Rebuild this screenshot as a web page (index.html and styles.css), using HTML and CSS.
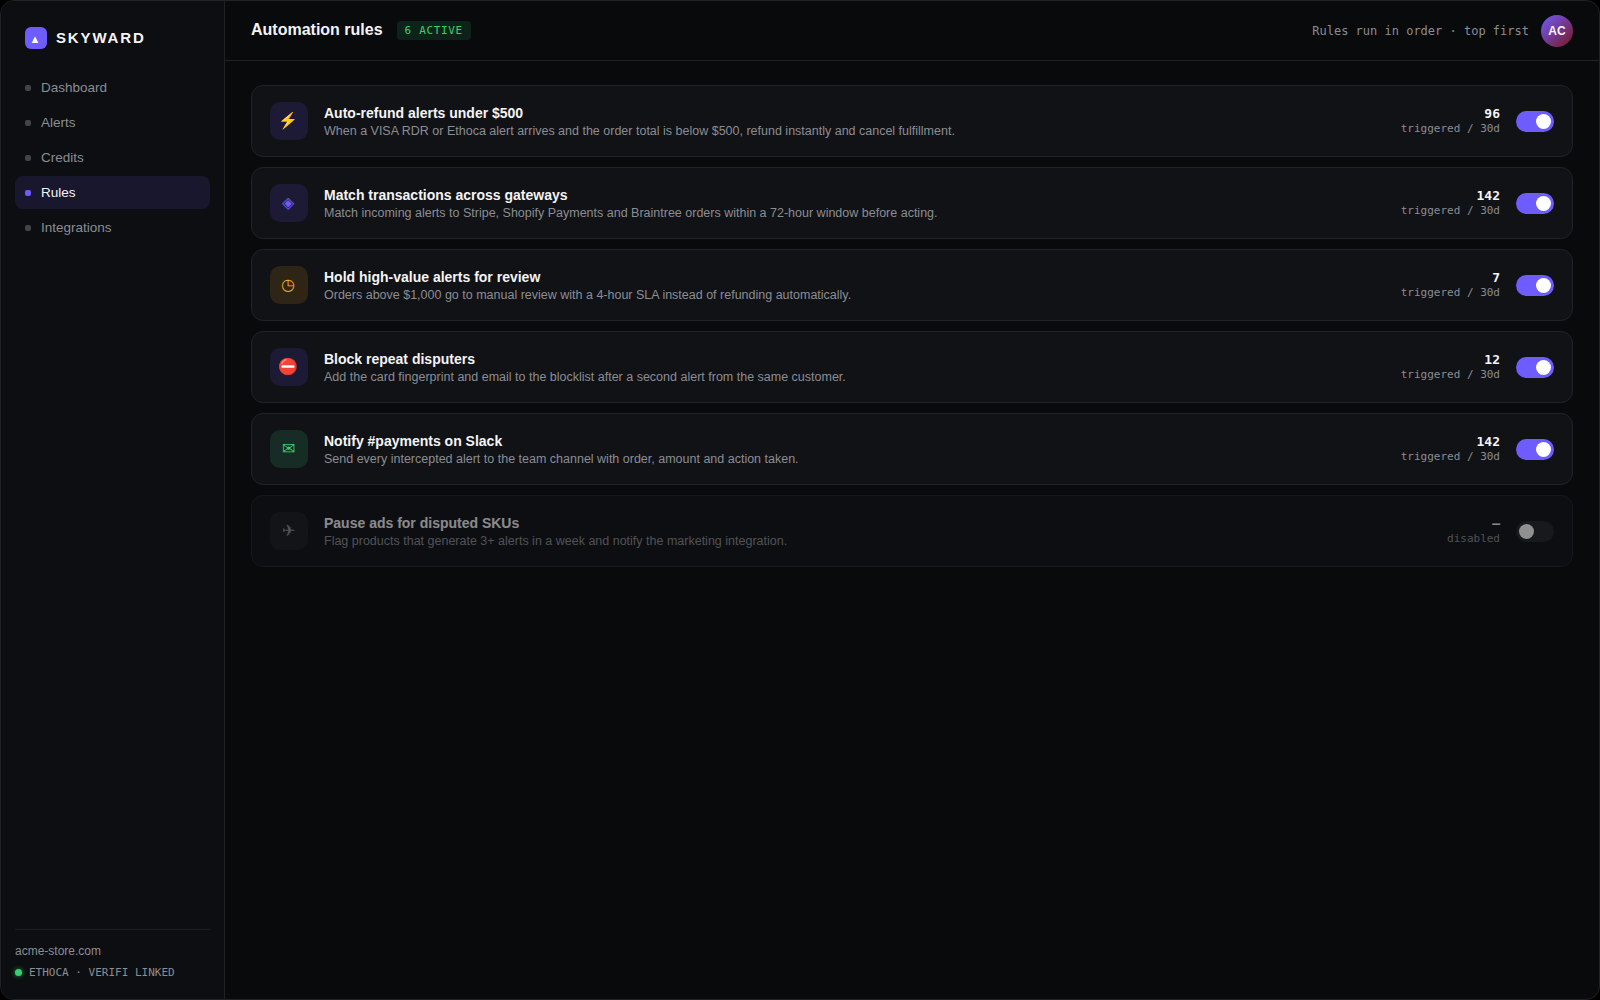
FILE: index.html
```html
<!DOCTYPE html>
<html lang="en">
<head>
<meta charset="utf-8">
<title>Skyward – Automation rules</title>
<link rel="stylesheet" href="styles.css">
</head>
<body>
<div class="window">
  <aside class="sidebar">
    <div class="brand"><span class="brand-mark">▲</span><span class="brand-name">SKYWARD</span></div>
    <nav class="nav">
      <a class="nav-item">Dashboard</a>
      <a class="nav-item">Alerts</a>
      <a class="nav-item">Credits</a>
      <a class="nav-item active">Rules</a>
      <a class="nav-item">Integrations</a>
    </nav>
    <div class="account">
      <div class="store">acme-store.com</div>
      <div class="status"><span class="status-dot"></span>ETHOCA · VERIFI LINKED</div>
    </div>
  </aside>
  <main class="main">
    <header class="topbar">
      <h1 class="title">Automation rules</h1>
      <span class="badge">6 ACTIVE</span>
      <span class="hint">Rules run in order · top first</span>
      <span class="avatar">AC</span>
    </header>
    <section class="rules">
      <article class="rule">
        <div class="icon">⚡</div>
        <div class="info"><div class="name">Auto-refund alerts under $500</div><div class="desc">When a VISA RDR or Ethoca alert arrives and the order total is below $500, refund instantly and cancel fulfillment.</div></div>
        <div class="stat"><b>96</b><span>triggered / 30d</span></div>
        <div class="toggle on"></div>
      </article>
      <article class="rule">
        <div class="icon">◈</div>
        <div class="info"><div class="name">Match transactions across gateways</div><div class="desc">Match incoming alerts to Stripe, Shopify Payments and Braintree orders within a 72-hour window before acting.</div></div>
        <div class="stat"><b>142</b><span>triggered / 30d</span></div>
        <div class="toggle on"></div>
      </article>
      <article class="rule">
        <div class="icon amber">◷</div>
        <div class="info"><div class="name">Hold high-value alerts for review</div><div class="desc">Orders above $1,000 go to manual review with a 4-hour SLA instead of refunding automatically.</div></div>
        <div class="stat"><b>7</b><span>triggered / 30d</span></div>
        <div class="toggle on"></div>
      </article>
      <article class="rule">
        <div class="icon">⛔</div>
        <div class="info"><div class="name">Block repeat disputers</div><div class="desc">Add the card fingerprint and email to the blocklist after a second alert from the same customer.</div></div>
        <div class="stat"><b>12</b><span>triggered / 30d</span></div>
        <div class="toggle on"></div>
      </article>
      <article class="rule">
        <div class="icon green">✉</div>
        <div class="info"><div class="name">Notify #payments on Slack</div><div class="desc">Send every intercepted alert to the team channel with order, amount and action taken.</div></div>
        <div class="stat"><b>142</b><span>triggered / 30d</span></div>
        <div class="toggle on"></div>
      </article>
      <article class="rule disabled">
        <div class="icon muted">✈</div>
        <div class="info"><div class="name">Pause ads for disputed SKUs</div><div class="desc">Flag products that generate 3+ alerts in a week and notify the marketing integration.</div></div>
        <div class="stat"><b>—</b><span>disabled</span></div>
        <div class="toggle"></div>
      </article>
    </section>
  </main>
</div>
</body>
</html>
```
FILE: styles.css
```css
* { box-sizing: border-box; }
body {
  margin: 0;
  background: #000;
  color: #f4f4f5;
  font-family: "Liberation Sans", Arial, sans-serif;
}
.window {
  display: flex;
  width: 1600px;
  height: 1000px;
  border: 1px solid #222326;
  border-radius: 14px;
  overflow: hidden;
  background: #090a0c;
}
.sidebar {
  display: flex;
  flex-direction: column;
  width: 224px;
  padding: 20px 14px;
  border-right: 1px solid #1f2023;
  background: #0c0e11;
}
.brand {
  display: flex;
  align-items: center;
  gap: 9px;
  padding: 6px 10px 22px;
}
.brand-mark {
  display: grid;
  place-items: center;
  width: 22px;
  height: 22px;
  padding: 1px 2px 0 0;
  border-radius: 6px;
  background: #6e5cff;
  color: #fff;
  font-size: 11px;
}
.brand-name { padding-bottom: 1px; font-size: 15px; font-weight: 700; letter-spacing: 1.85px; line-height: 17px; }
.nav { display: flex; flex-direction: column; gap: 2px; }
.nav-item {
  display: flex;
  align-items: center;
  gap: 10px;
  height: 33px;
  padding: 0 10px;
  border-radius: 8px;
  color: #8b8d93;
  font-size: 13.5px;
}
.nav-item::before { content: ""; width: 6px; height: 6px; border-radius: 2px; background: #434447; }
.nav-item.active { background: #19172d; color: #f4f4f5; }
.nav-item.active::before { background: #6e5cff; }
.account {
  margin-top: auto;
  padding-top: 14px;
  border-top: 1px solid #1c1d20;
  color: #8b8d93;
  font-size: 12px;
}
.store { line-height: 14px; }
.status {
  display: flex;
  align-items: center;
  gap: 7px;
  margin-top: 8px;
  font: 11px/13px "DejaVu Sans Mono", monospace;
}
.status-dot { width: 7px; height: 7px; border-radius: 50%; background: #34d26e; box-shadow: 0 0 5px #249450; }
.main { flex: 1; min-width: 0; }
.topbar {
  display: flex;
  align-items: center;
  height: 60px;
  padding: 0 26px;
  border-bottom: 1px solid #222326;
}
.title { margin: 0; padding-bottom: 2px; font-size: 16px; line-height: 18px; }
.badge {
  margin-left: 14px;
  padding: 3px 8px;
  border-radius: 4px;
  background: #0d2319;
  color: #34d26e;
  font: 11px/13px "DejaVu Sans Mono", monospace;
  letter-spacing: 0.66px;
}
.hint { margin-left: auto; color: #8b8d93; font: 12px/14px "DejaVu Sans Mono", monospace; }
.avatar {
  display: grid;
  place-items: center;
  width: 32px;
  height: 32px;
  margin-left: 12px;
  border-radius: 50%;
  background: linear-gradient(135deg, #6e5cff, #7a1620);
  color: #f4f4f5;
  font-size: 12px;
  font-weight: 700;
}
.rules { display: flex; flex-direction: column; gap: 10px; padding: 24px 26px; }
.rule {
  display: flex;
  align-items: center;
  gap: 16px;
  padding: 16px 18px;
  border: 1px solid #222326;
  border-radius: 12px;
  background: #111216;
}
.rule.disabled { opacity: 0.55; }
.icon {
  display: grid;
  place-items: center;
  width: 38px;
  height: 38px;
  padding: 0 2px 1px 0;
  border-radius: 10px;
  background: #1c1a35;
  color: #6e5cff;
  font-size: 16px;
}
.icon.amber { background: #2f2517; color: #f5a623; }
.icon.green { background: #162c24; color: #34d26e; }
.icon.muted { background: #1c1d21; color: #8b8d93; }
.info { flex: 1; padding-top: 3px; }
.name { font-size: 14px; font-weight: 700; line-height: 17px; }
.desc { margin-top: 1px; color: #8b8d93; font-size: 12.5px; line-height: 17px; }
.stat {
  display: flex;
  flex-direction: column;
  align-items: flex-end;
  padding-bottom: 1px;
  color: #8b8d93;
  font: 11px/13px "DejaVu Sans Mono", monospace;
}
.stat b { margin-bottom: 1px; color: #f4f4f5; font-size: 13px; line-height: 15px; }
.toggle {
  display: flex;
  align-items: center;
  width: 38px;
  height: 21px;
  padding: 0 3px;
  border-radius: 11px;
  background: #25262a;
}
.toggle::before { content: ""; width: 15px; height: 15px; border-radius: 50%; background: #fff; }
.toggle.on { justify-content: flex-end; background: #6e5cff; }
```
